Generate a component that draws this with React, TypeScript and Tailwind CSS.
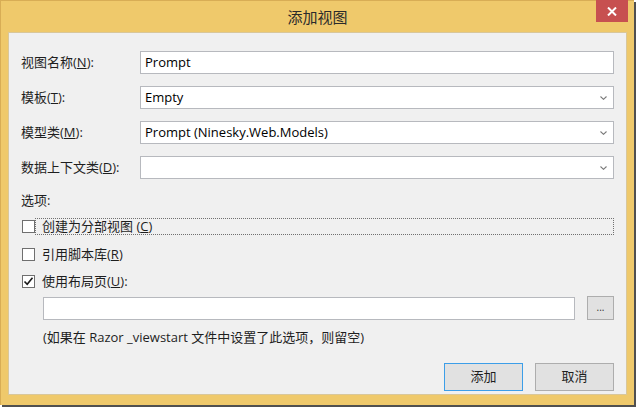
import type { ReactNode } from 'react'

const cjk = "font-['Open_Sans','Noto_Sans_CJK_SC',sans-serif]"

function Chevron() {
  return (
    <svg width="7" height="4" viewBox="0 0 7 4" className="mr-[6px]">
      <path d="M0.5 0.5 L3.5 3.3 L6.5 0.5" fill="none" stroke="#7a7a7a" strokeWidth="1.1" />
    </svg>
  )
}

function Field({ label, value, select }: { label: ReactNode; value?: string; select?: boolean }) {
  return (
    <div className="flex items-center h-[23px] mb-[12px]">
      <div className="w-[119px] text-[13px] text-[#1e1e1e]">{label}</div>
      <div className="flex-1 h-[23px] flex items-center justify-between bg-white border border-[#b7b9be] pl-[4px]">
        <span className="text-[13px] text-black">{value}</span>
        {select && <Chevron />}
      </div>
    </div>
  )
}

function Check({ checked }: { checked?: boolean }) {
  return (
    <div className="w-[13px] h-[13px] ml-[1px] border border-[#6f6f6f] bg-white flex items-center justify-center shrink-0">
      {checked && (
        <svg width="11" height="11" viewBox="0 0 11 11">
          <path d="M1.5 5.5 L4.2 8.3 L9.5 1.8" fill="none" stroke="#1a1a1a" strokeWidth="1.6" />
        </svg>
      )}
    </div>
  )
}

export default function App() {
  return (
    <div className={`w-[639px] h-[409px] bg-white ${cjk}`}>
      <div className="w-[634px] h-[405px] bg-[#efc96b] border-t border-l border-[#d8ad55] shadow-[2px_2px_0_#505050] flex flex-col">
        <div className="h-[31px] flex items-start relative">
          <div className="flex-1 text-center pt-[5px] text-[15px] text-[#2b2b2b]">添加视图</div>
          <div className="absolute right-[6px] top-[-1px] w-[32px] h-[22px] bg-[#c75050] flex items-center justify-center">
            <svg width="10" height="9" viewBox="0 0 10 9">
              <path d="M1 0.5 L9 8.5 M9 0.5 L1 8.5" stroke="white" strokeWidth="2" />
            </svg>
          </div>
        </div>
        <div className="ml-[7px] mr-[7px] h-[363px] bg-[#f0f0f0] border border-[#d9c79a] flex flex-col pt-[18px] px-[12px]">
          <Field label={<>视图名称(<u>N</u>):</>} value="Prompt" />
          <Field label={<>模板(<u>T</u>):</>} value="Empty" select />
          <Field label={<>模型类(<u>M</u>):</>} value="Prompt (Ninesky.Web.Models)" select />
          <Field label={<>数据上下文类(<u>D</u>):</>} select />

          <div className="text-[13px] text-[#1e1e1e] leading-[16px] mt-[1px]">选项:</div>

          <div className="flex items-center h-[17px] mt-[10px]">
            <Check />
            <div className="flex-1 h-[17px] border border-dotted border-[#707070] pl-[6px] flex items-center text-[13px] text-[#1e1e1e]">
              创建为分部视图 (<u>C</u>)
            </div>
          </div>
          <div className="flex items-center h-[17px] mt-[11px] text-[13px] text-[#1e1e1e]">
            <Check />
            <span className="ml-[7px]">引用脚本库(<u>R</u>)</span>
          </div>
          <div className="flex items-center h-[17px] mt-[10px] text-[13px] text-[#1e1e1e]">
            <Check checked />
            <span className="ml-[7px]">使用布局页(<u>U</u>):</span>
          </div>

          <div className="flex items-center mt-[6px] ml-[22px]">
            <div className="flex-1 h-[23px] bg-white border border-[#b7b9be]" />
            <div className="ml-[12px] w-[27px] h-[24px] bg-[#e1e1e1] border border-[#adadad] flex items-center justify-center text-[10px] text-[#333] leading-none pb-[3px]">
              ...
            </div>
          </div>

          <div className="ml-[22px] mt-[9px] text-[13px] leading-[16px] text-[#1e1e1e]">
            (如果在 Razor _viewstart 文件中设置了此选项，则留空)
          </div>

          <div className="flex justify-end gap-[12px] mt-[18px]">
            <div className="w-[79px] h-[28px] bg-[#e1e1e1] border border-[#3c9ee8] flex items-center justify-center text-[13px] text-[#1e1e1e]">
              添加
            </div>
            <div className="w-[79px] h-[28px] bg-[#e1e1e1] border border-[#adadad] flex items-center justify-center text-[13px] text-[#1e1e1e]">
              取消
            </div>
          </div>
        </div>
      </div>
    </div>
  )
}
